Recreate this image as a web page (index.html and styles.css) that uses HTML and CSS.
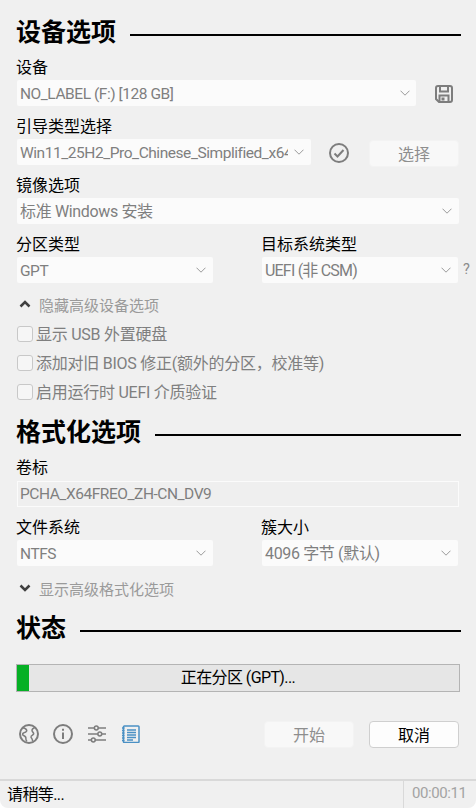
FILE: index.html
```html
<!DOCTYPE html>
<html lang="zh-CN">
<head>
<meta charset="utf-8">
<title>Rufus</title>
<link rel="stylesheet" href="styles.css">
</head>
<body>
<div class="window">
  <main class="content">
    <div class="section-head first"><h2>设备选项</h2><span class="rule"></span></div>

    <div class="field">
      <div class="label">设备</div>
      <div class="row">
        <div class="select device"><span class="value latin">NO_LABEL (F:) [128 GB]</span><svg class="chev" viewBox="0 0 10 6"><path d="M.5.7 5 5.2 9.5.7"/></svg></div>
        <svg class="ico save" viewBox="0 0 18 18"><path class="st2" d="M1 3a2 2 0 0 1 2-2h12a2 2 0 0 1 2 2v12a2 2 0 0 1-2 2H4l-3-3z"/><path class="st2" d="M5 1v5.5h8V1M4.500 17v-6.500h9V17"/><rect class="fill" x="6.500" y="12.500" width="3" height="3"/></svg>
      </div>
    </div>

    <div class="field">
      <div class="label">引导类型选择</div>
      <div class="row">
        <div class="select boot"><span class="value latin clip">Win11_25H2_Pro_Chinese_Simplified_x64</span><svg class="chev" viewBox="0 0 10 6"><path d="M.5.7 5 5.2 9.5.7"/></svg></div>
        <svg class="ico check" viewBox="0 0 20 20"><circle class="st2" cx="10" cy="10" r="9"/><path class="st2" d="m5.500 10.500 3 3 6-6.500"/></svg>
        <div class="btn disabled pick">选择</div>
      </div>
    </div>

    <div class="field">
      <div class="label">镜像选项</div>
      <div class="select full"><span class="value mixed">标准 Windows 安装</span><svg class="chev" viewBox="0 0 10 6"><path d="M.5.7 5 5.2 9.5.7"/></svg></div>
    </div>

    <div class="field two">
      <div class="col">
        <div class="label">分区类型</div>
        <div class="select"><span class="value latin">GPT</span><svg class="chev" viewBox="0 0 10 6"><path d="M.5.7 5 5.2 9.500.7"/></svg></div>
      </div>
      <div class="col">
        <div class="label">目标系统类型</div>
        <div class="row">
          <div class="select wide"><span class="value mixed narrow">UEFI (非 CSM)</span><svg class="chev" viewBox="0 0 10 6"><path d="M.5.7 5 5.2 9.500.7"/></svg></div>
          <span class="help">?</span>
        </div>
      </div>
    </div>

    <div class="expander adv-device"><svg class="arrow" viewBox="0 0 12 8"><path d="M1.500 6.500 6 2l4.500 4.500"/></svg><span>隐藏高级设备选项</span></div>
    <label class="check-row"><span class="box"></span><span class="check-text">显示 USB 外置硬盘</span></label>
    <label class="check-row"><span class="box"></span><span class="check-text">添加对旧 BIOS 修正(额外的分区，校准等)</span></label>
    <label class="check-row"><span class="box"></span><span class="check-text">启用运行时 UEFI 介质验证</span></label>

    <div class="section-head format"><h2>格式化选项</h2><span class="rule"></span></div>

    <div class="field">
      <div class="label">卷标</div>
      <div class="input">PCHA_X64FREO_ZH-CN_DV9</div>
    </div>

    <div class="field two">
      <div class="col">
        <div class="label">文件系统</div>
        <div class="select"><span class="value latin">NTFS</span><svg class="chev" viewBox="0 0 10 6"><path d="M.5.7 5 5.2 9.500.7"/></svg></div>
      </div>
      <div class="col">
        <div class="label">簇大小</div>
        <div class="select wide"><span class="value mixed">4096 字节 (默认)</span><svg class="chev" viewBox="0 0 10 6"><path d="M.5.7 5 5.2 9.500.7"/></svg></div>
      </div>
    </div>

    <div class="expander adv-format"><svg class="arrow" viewBox="0 0 12 8"><path d="M1.500 1.500 6 6l4.500-4.500"/></svg><span>显示高级格式化选项</span></div>

    <div class="section-head state"><h2>状态</h2><span class="rule"></span></div>

    <div class="progress"><div class="bar"></div><span class="progress-text">正在分区 (GPT)...</span></div>

    <div class="toolbar">
      <div class="tools">
        <svg class="tool" viewBox="0 0 20 20"><circle class="st2" cx="10" cy="10" r="9"/><path class="st15" d="M3.500 3.800c2 .2 3.700 1 4.200 2.400.5 1.500-1.700 2.100-3.200 2.800-1.200.6-1.200 2 .1 2.500 1.600.6 2.500 1.500 2.300 3.200-.1 1 .3 2 1 2.700M16 3.500c-1.500.5-3 1.700-3 3 0 1.400 1.500 1.700 1.700 3 .2 1.200-1.700 1.500-2.500 2.600-.7 1 .2 2.200.9 3 .5.700.5 1.500.4 2.200"/></svg>
        <svg class="tool" viewBox="0 0 20 20"><circle class="st2" cx="10" cy="10" r="9"/><path class="st2" d="M10 8.500V15M10 4.800v1.900"/></svg>
        <svg class="tool sliders" viewBox="0 0 18 18"><path class="st15" d="M0 3h6.500M10 3h8M0 9h10M13.500 9H18M0 15h3.500M7 15h11"/><circle class="st15" cx="8.300" cy="3" r="1.900"/><circle class="st15" cx="11.800" cy="9" r="1.900"/><circle class="st15" cx="5.300" cy="15" r="1.900"/></svg>
        <svg class="tool log" viewBox="0 0 18 18"><rect class="blue" x="1.500" y="1" width="15.500" height="16.500" rx=".8"/><path class="blue" d="M5 5h9M5 7.500h9M5 10h9M5 12.500h9M5 15h6M0 3h2.500M0 5.500h2.500M0 8h2.500M0 10.500h2.500M0 13h2.500M0 15.500h2.500"/></svg>
      </div>
      <div class="actions">
        <div class="btn disabled">开始</div>
        <div class="btn primary">取消</div>
      </div>
    </div>
  </main>
  <footer class="status">
    <div class="status-text">请稍等...</div>
    <div class="status-time">00:00:11</div>
  </footer>
</div>
</body>
</html>
```

FILE: styles.css
```css
* { box-sizing: border-box; }
html, body { margin: 0; padding: 0; background: #fff; }
body {
  width: 476px;
  height: 808px;
  overflow: hidden;
  font-family: Roboto, "Noto Sans CJK SC", sans-serif;
  font-size: 16px;
  color: #000;
}
.window {
  width: 476px;
  height: 808px;
  background: #f0f0f0;
  border-radius: 0 0 8px 8px;
  display: flex;
  flex-direction: column;
  overflow: hidden;
}
.content { flex: 1; padding: 0 15px 0 16px; }
.section-head { display: flex; align-items: center; height: 32px; gap: 14px; }
.section-head.first { margin-top: 15px; }
.section-head.format { margin-top: 9px; }
.section-head.state { margin-top: 11px; }
.section-head h2 {
  margin: -2px 0 0;
  font-size: 25px;
  line-height: 32px;
  font-weight: 700;
  font-family: "Noto Sans CJK SC", sans-serif;
}
.rule { flex: 1; height: 2px; background: #000; margin-top: 7px; }
.field { margin-top: 8px; }
.label {
  height: 25px;
  line-height: 23px;
  font-size: 16px;
  font-family: "Noto Sans CJK SC", sans-serif;
}
.row { display: flex; align-items: flex-start; height: 26px; }
.select {
  margin-left: 1px;
  height: 26px;
  background: #fbfbfb;
  color: #7f7f7f;
  border-radius: 2px;
  display: flex;
  align-items: center;
  justify-content: space-between;
  padding: 0 4px 0 3px;
  white-space: nowrap;
  flex: none;
}
.select.device { width: 399px; padding-right: 3px; }
.select.boot { width: 294px; padding-right: 4px; }
.select.full { width: 442px; padding-right: 4px; }
.value { display: block; line-height: 26px; padding-top: 2px; }
.value.latin { font-size: 15.500px; letter-spacing: -.45px; }
.value.mixed { letter-spacing: -.35px; }
.value.mixed.narrow { letter-spacing: -.8px; }
.value.clip { width: 268px; overflow: hidden; }
.chev { width: 10px; height: 6px; margin-right: 3px; flex: none; }
.chev path { fill: none; stroke: #9a9a9a; stroke-width: 1; }
.ico { flex: none; }
.st2 { fill: none; stroke: #7d7d7d; stroke-width: 2; }
.st15 { fill: none; stroke: #7d7d7d; stroke-width: 1.500; }
.fill { fill: #7d7d7d; }
.save { width: 18px; height: 18px; margin: 5px 0 0 19px; }
.check { width: 20px; height: 20px; margin: 4px 0 0 18px; }
.btn {
  width: 90px;
  height: 27px;
  border-radius: 4px;
  font-size: 16px;
  line-height: 25px;
  text-align: center;
  font-family: "Noto Sans CJK SC", sans-serif;
  flex: none;
}
.btn.disabled { background: #f8f8f8; border: 1px solid #f3f3f3; color: #8e8e8e; }
.btn.primary { background: #fdfdfd; border: 1px solid #cfcfcf; color: #000; }
.pick { margin: 1px 0 0 20px; line-height: 24px; }
.two { display: grid; grid-template-columns: 196px 197px; column-gap: 49px; }
.two .select { width: 196px; }
.two .select.wide { width: 196px; margin-left: 1px; }
.help { margin-left: 5px; color: #8c8c8c; font-size: 14.500px; line-height: 26px; }
.expander {
  display: flex;
  align-items: center;
  height: 24px;
  color: #9a9a9a;
  font-size: 15px;
  font-family: "Noto Sans CJK SC", sans-serif;
  padding-left: 3px;
  gap: 8px;
}
.adv-device { margin-top: 9px; }
.adv-format { margin-top: 10px; }
.arrow { width: 12px; height: 8px; }
.arrow path { fill: none; stroke: #404040; stroke-width: 2.500; }
.check-row {
  display: flex;
  align-items: center;
  height: 29px;
  color: #7f7f7f;
  gap: 3px;
}
.check-row:first-of-type { margin-top: 3px; }
.check-text { letter-spacing: -.25px; padding-bottom: 2px; }
.box {
  width: 16px;
  height: 16px;
  margin-left: 1px;
  border: 1px solid #c8c8c8;
  border-radius: 3px;
  background: #f6f6f6;
  flex: none;
}
.input {
  margin: 1px 0 0 1px;
  height: 26px;
  width: 442px;
  background: #efefef;
  border: 1px solid #fbfbfb;
  color: #7f7f7f;
  font-size: 15.500px;
  letter-spacing: -.45px;
  line-height: 24px;
  padding-left: 2px;
}
.progress {
  margin-top: 21px;
  position: relative;
  width: 444px;
  height: 28px;
  border: 1px solid #b4b4b4;
  background: #e6e6e6;
  text-align: center;
  line-height: 26px;
  letter-spacing: -.6px;
}
.bar { position: absolute; left: 0; top: 0; bottom: 0; width: 12px; background: #06b025; }
.progress-text { position: relative; }
.toolbar { display: flex; justify-content: space-between; align-items: flex-start; margin-top: 29px; padding: 0 2px 0 3px; }
.tools { display: flex; gap: 14px; align-items: center; padding-top: 3px; }
.tool { width: 20px; height: 20px; flex: none; }
.sliders { width: 18px; height: 18px; margin-left: 1px; }
.log { width: 18px; height: 18px; margin-left: 2px; }
.blue { fill: none; stroke: #4a90c4; stroke-width: 1.500; }
.actions { display: flex; gap: 15px; }
.status {
  height: 29px;
  border-top: 2px solid #d9d9d9;
  display: flex;
  align-items: center;
  justify-content: space-between;
}
.status-text {
  padding: 0 0 3px 7px;
  flex: 1;
  letter-spacing: -.6px;
}
.status-time {
  width: 73px;
  height: 100%;
  border-left: 1px solid #d9d9d9;
  color: #a3a3a3;
  font-size: 15px;
  letter-spacing: -.4px;
  line-height: 25px;
  padding-left: 8px;
}
```
